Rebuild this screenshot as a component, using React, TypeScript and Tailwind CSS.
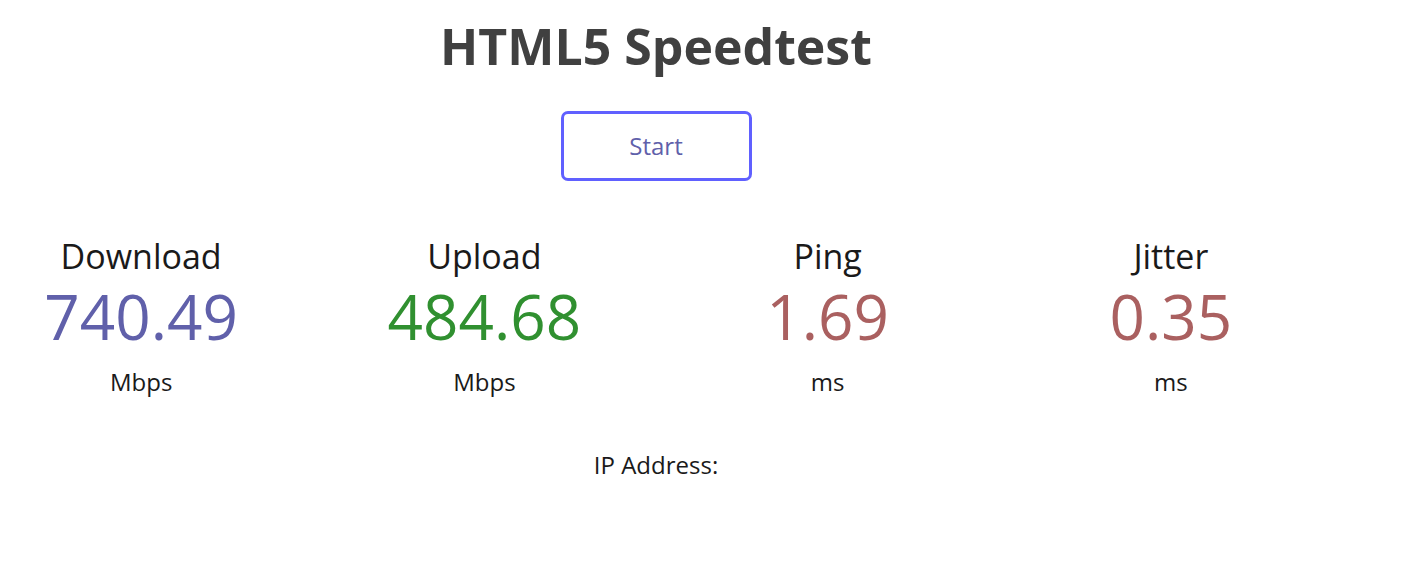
import React from 'react';

const font = { fontFamily: '"Open Sans", "Noto Sans", sans-serif' };

type Metric = { name: string; value: string; unit: string; color: string };

const metrics: Metric[] = [
    { name: 'Download', value: '740.49', unit: 'Mbps', color: 'text-[#6060AA]' },
    { name: 'Upload', value: '484.68', unit: 'Mbps', color: 'text-[#309030]' },
    { name: 'Ping', value: '1.69', unit: 'ms', color: 'text-[#AA6060]' },
    { name: 'Jitter', value: '0.35', unit: 'ms', color: 'text-[#AA6060]' },
];

function TestArea({ m }: { m: Metric }) {
    return (
        <div className="flex flex-col items-center">
            <div className="text-[34px] leading-[44px] text-[#1a1a1a]">{m.name}</div>
            <div className={`mt-[2px] text-[62px] leading-[72px] ${m.color}`}>{m.value}</div>
            <div className="mt-[14px] text-[24px] leading-[32px] text-[#1a1a1a]">{m.unit}</div>
        </div>
    );
}

export default function App() {
    return (
        <div className="w-[1410px] h-[579px] bg-white overflow-hidden" style={font}>
            <div className="w-[1312px] flex flex-col items-center text-center">
                {/* Title */}
                <h1 className="mt-[14px] text-[50px] leading-[64px] font-bold text-[#404040]">
                    HTML5 Speedtest
                </h1>

                {/* Start button */}
                <button className="mt-[33px] w-[191px] h-[70px] border-[3px] border-[#6060FF] rounded-[7px] text-[24px] text-[#6060AA] bg-transparent">
                    Start
                </button>

                {/* Results */}
                <div className="mt-[53px] w-full grid grid-cols-4 gap-x-[61px]">
                    {metrics.map(m => (
                        <TestArea key={m.name} m={m} />
                    ))}
                </div>

                <div className="mt-[51px] text-[24px] leading-[32px] text-[#1a1a1a]">IP Address:</div>
            </div>
        </div>
    );
}
